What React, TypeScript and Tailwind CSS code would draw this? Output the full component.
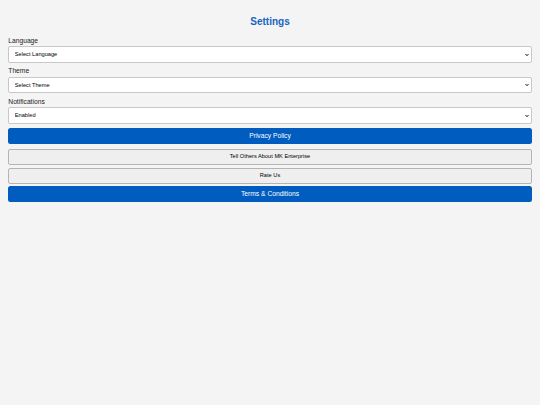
import { useState } from "react";

const font = { fontFamily: '"Liberation Sans", Arial, Helvetica, sans-serif' };

interface FieldProps {
    label: string;
    value: string;
    options: string[];
    onChange: (v: string) => void;
    first?: boolean;
}

function Field({ label, value, options, onChange, first }: FieldProps) {
    return (
        <div className={first ? "" : "mt-[4.5px]"}>
            <label className="block text-[6.7px] leading-[8px] text-[#222] mb-[1.6px]">{label}</label>
            <div className="relative">
                <select
                    value={value}
                    onChange={(e) => onChange(e.target.value)}
                    className="block w-full h-[16.5px] pl-[5.5px] pr-[10px] text-[5.66px] text-black bg-white border border-[#c8c8c8] rounded-[2px] appearance-none"
                >
                    {options.map((o) => (
                        <option key={o} value={o}>{o}</option>
                    ))}
                </select>
                {/* native-looking chevron */}
                <svg
                    className="pointer-events-none absolute right-[3px] top-1/2 -translate-y-1/2 w-[4px] h-[3px]"
                    viewBox="0 0 8 6"
                    fill="none"
                    stroke="#222"
                    strokeWidth={2}
                >
                    <path d="M1 1l3 3.5L7 1" />
                </svg>
            </div>
        </div>
    );
}

export default function App() {
    const [language, setLanguage] = useState("Select Language");
    const [theme, setTheme] = useState("Select Theme");
    const [notifications, setNotifications] = useState("Enabled");

    return (
        <div className="min-h-[405px] w-full bg-[#f4f4f4] px-[8.3px] pt-[16px]" style={font}>
            <h1 className="text-center text-[10px] leading-[12px] font-bold text-[#1565c0] mb-[8.7px]">Settings</h1>

            <Field
                first
                label="Language"
                value={language}
                onChange={setLanguage}
                options={["Select Language", "English", "Hindi", "Gujarati"]}
            />
            <Field
                label="Theme"
                value={theme}
                onChange={setTheme}
                options={["Select Theme", "Light", "Dark"]}
            />
            <Field
                label="Notifications"
                value={notifications}
                onChange={setNotifications}
                options={["Enabled", "Disabled"]}
            />

            <button className="mt-[4.5px] block w-full h-[15.8px] bg-[#005cbf] text-white text-[6.7px] rounded-[2.5px]">
                Privacy Policy
            </button>
            <button className="mt-[4.3px] block w-full h-[16px] bg-[#efefef] border border-[#b4b4b4] text-black text-[5.66px] rounded-[2px]">
                Tell Others About MK Enterprise
            </button>
            <button className="mt-[3px] block w-full h-[16px] bg-[#efefef] border border-[#b4b4b4] text-black text-[5.66px] rounded-[2px]">
                Rate Us
            </button>
            <button className="mt-[2.4px] block w-full h-[16px] bg-[#005cbf] text-white text-[6.7px] rounded-[2.5px]">
                Terms &amp; Conditions
            </button>
        </div>
    );
}
